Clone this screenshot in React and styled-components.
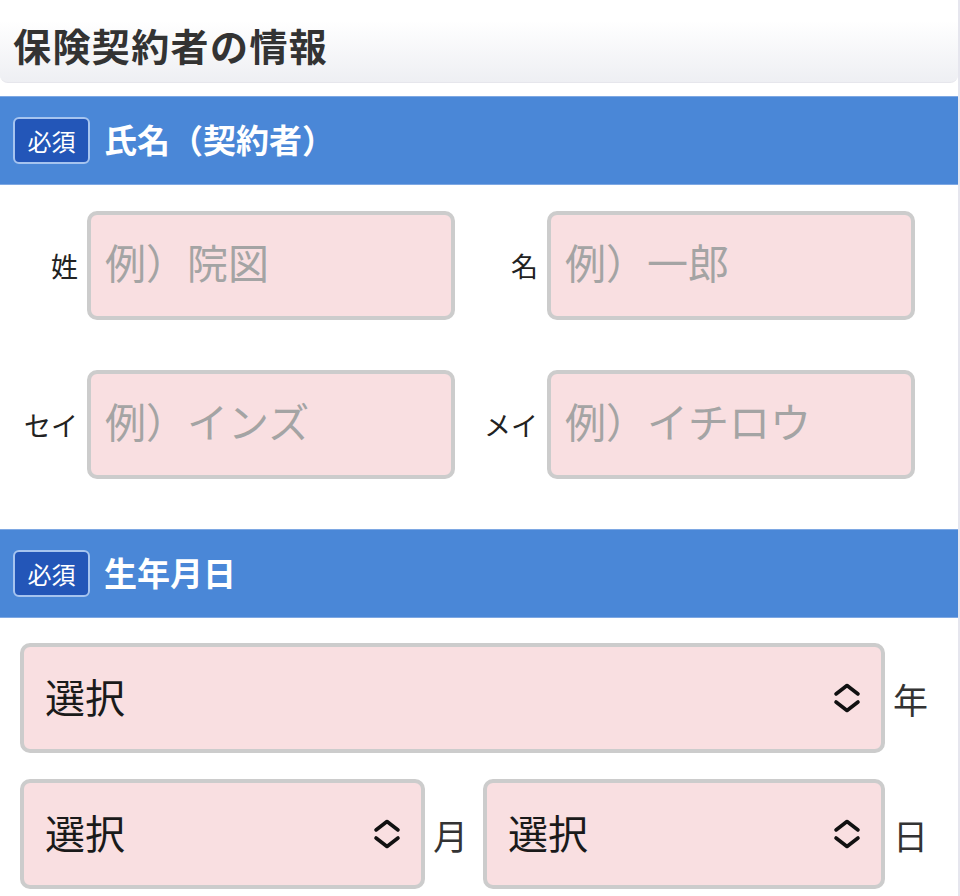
import React from "react";
import styled, { createGlobalStyle } from "styled-components";

const GlobalStyle = createGlobalStyle`
  html, body {
    margin: 0;
    padding: 0;
    background: #fff;
  }
  body {
    font-family: "Noto Sans CJK JP", "Noto Sans", sans-serif;
    color: #333;
  }
  * {
    box-sizing: border-box;
  }
`;

const ChevronIcon = () => (
  <svg width="28" height="32" viewBox="0 0 28 32" fill="none">
    <path d="M3 12 L14 3.5 L25 12" stroke="#111" strokeWidth="3.6" strokeLinecap="round" strokeLinejoin="round" />
    <path d="M3 20 L14 28.5 L25 20" stroke="#111" strokeWidth="3.6" strokeLinecap="round" strokeLinejoin="round" />
  </svg>
);

const NameField = ({ label, placeholder }) => (
  <Field>
    <FieldLabel>{label}</FieldLabel>
    <TextInput placeholder={placeholder} />
  </Field>
);

const SelectBox = ({ width }) => (
  <SelectWrap $width={width}>
    <Select defaultValue="">
      <option value="">選択</option>
    </Select>
    <SelectIcon>
      <ChevronIcon />
    </SelectIcon>
  </SelectWrap>
);

const App = () => {
  return (
    <Page>
      <GlobalStyle />
      <PageHeader>
        <PageTitle>保険契約者の情報</PageTitle>
      </PageHeader>

      <SectionBar>
        <Badge>必須</Badge>
        <SectionTitle>氏名（契約者）</SectionTitle>
      </SectionBar>
      <NameGrid>
        <NameField label="姓" placeholder="例）院図" />
        <NameField label="名" placeholder="例）一郎" />
        <NameField label="セイ" placeholder="例）インズ" />
        <NameField label="メイ" placeholder="例）イチロウ" />
      </NameGrid>

      <SectionBar>
        <Badge>必須</Badge>
        <SectionTitle>生年月日</SectionTitle>
      </SectionBar>
      <DateBlock>
        <DateRow>
          <SelectBox width="865px" />
          <UnitLabel>年</UnitLabel>
        </DateRow>
        <DateRow>
          <SelectBox width="405px" />
          <UnitLabel>月</UnitLabel>
          <SelectBox width="402px" />
          <UnitLabel>日</UnitLabel>
        </DateRow>
      </DateBlock>
    </Page>
  );
};

export default App;

const Page = styled.div`
  width: 960px;
  min-height: 100vh;
  border-right: 2px solid #e6e6ee;
`;

const PageHeader = styled.header`
  height: 83px;
  margin-bottom: 13px;
  display: flex;
  align-items: center;
  padding: 0 13px;
  background: linear-gradient(#ffffff 25%, #eeeff3);
  border-radius: 0 0 8px 8px;
  border-bottom: 1px solid #e6e6ec;
`;

const PageTitle = styled.h1`
  margin: 0;
  padding-top: 6px;
  font-size: 38px;
  font-weight: 700;
  color: #333;
  letter-spacing: 1.4px;
`;

const SectionBar = styled.div`
  height: 89px;
  display: flex;
  align-items: center;
  gap: 14px;
  padding: 0 13px;
  background: #4a87d7;
  border-top: 1px solid #7ea8e3;
  border-bottom: 1px solid #7ea8e3;
`;

const Badge = styled.span`
  width: 77px;
  height: 47px;
  display: flex;
  align-items: center;
  justify-content: center;
  background: #2356b8;
  border: 2px solid #a6c4ef;
  border-radius: 6px;
  color: #fff;
  font-size: 24px;
  font-weight: 400;
`;

const SectionTitle = styled.h2`
  margin: 0;
  padding-bottom: 3px;
  font-size: 33px;
  font-weight: 700;
  color: #fff;
`;

const NameGrid = styled.div`
  display: grid;
  grid-template-columns: 455px 460px;
  row-gap: 50px;
  padding: 26px 0 50px;
`;

const Field = styled.div`
  display: flex;
  align-items: center;
`;

const FieldLabel = styled.label`
  flex: 1;
  text-align: right;
  padding-right: 9px;
  font-size: 27px;
  color: #222;
`;

const TextInput = styled.input`
  width: 368px;
  height: 109px;
  padding: 0 14px 10px;
  background: #f9dfe1;
  border: 4px solid #cccccc;
  border-radius: 10px;
  font-family: inherit;
  font-size: 41px;
  color: #222;
  outline: none;

  &::placeholder {
    color: #a4a4a4;
  }
`;

const DateBlock = styled.div`
  display: flex;
  flex-direction: column;
  gap: 26px;
  padding: 25px 0 0 20px;
`;

const DateRow = styled.div`
  display: flex;
  align-items: center;
`;

const SelectWrap = styled.div`
  position: relative;
  width: ${(p) => p.$width};
  height: 110px;
`;

const Select = styled.select`
  width: 100%;
  height: 100%;
  appearance: none;
  -webkit-appearance: none;
  padding: 0 60px 4px 21px;
  background: #f9dfe1;
  border: 4px solid #cccccc;
  border-radius: 10px;
  font-family: inherit;
  font-size: 40px;
  color: #1a1a1a;
  outline: none;
`;

const SelectIcon = styled.span`
  position: absolute;
  right: 24px;
  top: 50%;
  transform: translateY(-50%);
  display: flex;
  pointer-events: none;
`;

const UnitLabel = styled.span`
  width: 58px;
  padding-left: 8px;
  font-size: 35px;
  color: #333;
`;
